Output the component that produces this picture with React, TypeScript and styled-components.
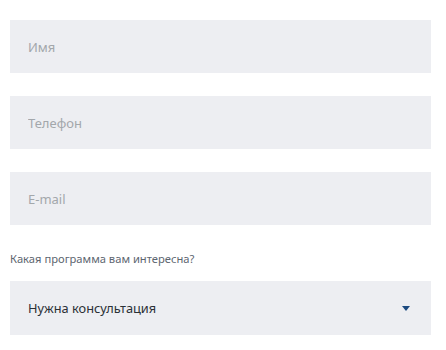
import React from "react";
import styled, { createGlobalStyle } from "styled-components";

const Global = createGlobalStyle`
  html, body { margin: 0; padding: 0; background: #ffffff; }
  body { font-family: "Noto Sans", "Open Sans", sans-serif; }
`;

const Form = styled.form`
  display: flex;
  flex-direction: column;
  padding: 20px 15px 0 10px;
  width: 421px;
`;

const Field = styled.div<{ $gap?: number }>`
  height: 53px;
  background: #edeef2;
  display: flex;
  align-items: center;
  padding: 0 18px;
  margin-bottom: ${(p) => p.$gap ?? 23}px;
  box-sizing: border-box;
`;

const Input = styled.input`
  border: none;
  outline: none;
  background: transparent;
  font-family: "Noto Sans", "Open Sans", sans-serif;
  font-size: 13px;
  color: #333;
  width: 100%;
  padding: 0;
  &::placeholder { color: #a3a7ab; }
`;

const Label = styled.div`
  font-size: 11.2px;
  color: #5d6670;
  margin: 27px 0 15px;
  line-height: 14px;
`;

const SelectBox = styled.div`
  height: 54px;
  background: #edeef2;
  display: flex;
  align-items: center;
  justify-content: space-between;
  padding: 0 21px 0 18px;
  box-sizing: border-box;
`;

const SelectText = styled.span`
  font-size: 12.8px;
  color: #2b3036;
`;

const Arrow = styled.svg`
  width: 8px;
  height: 5px;
`;

export default function App() {
  return (
    <>
      <Global />
      <Form>
        <Field><Input placeholder="Имя" /></Field>
        <Field><Input placeholder="Телефон" /></Field>
        <Field $gap={0}><Input placeholder="E-mail" /></Field>
        <Label>Какая программа вам интересна?</Label>
        <SelectBox>
          <SelectText>Нужна консультация</SelectText>
          <Arrow viewBox="0 0 8 5"><path d="M0 0h8L4 5z" fill="#1c4a80" /></Arrow>
        </SelectBox>
      </Form>
    </>
  );
}
